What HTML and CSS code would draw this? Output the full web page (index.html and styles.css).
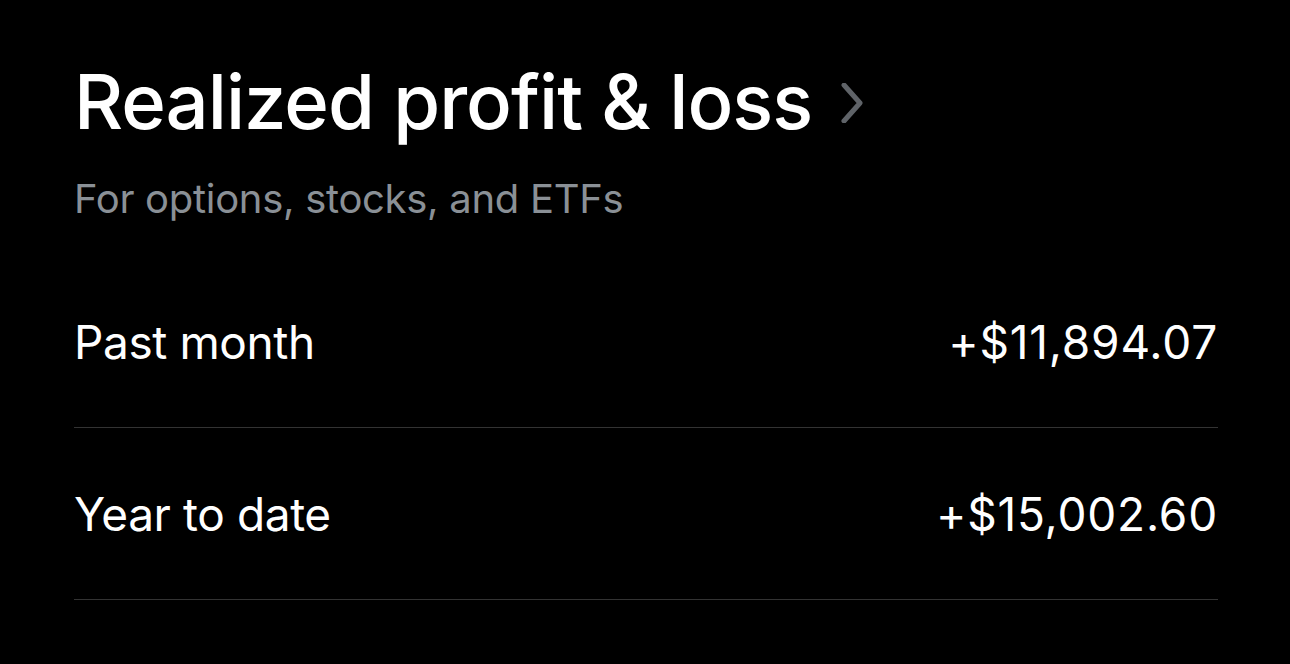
FILE: index.html
```html
<!DOCTYPE html>
<html lang="en">
<head>
    <meta charset="UTF-8">
    <meta name="viewport" content="width=device-width, initial-scale=1.0">
    <title>Realized profit &amp; loss</title>
    <link rel="stylesheet" href="styles.css">
</head>
<body>
    <section class="pnl">
        <header class="pnl-header">
            <h1 class="pnl-title">
                Realized profit &amp; loss
                <svg class="chevron" width="24" height="40" viewBox="0 0 24 40">
                    <path d="M4 2 L20 20 L4 38" fill="none" stroke="#5f6368" stroke-width="5" stroke-linecap="round" stroke-linejoin="round"/>
                </svg>
            </h1>
            <p class="pnl-sub">For options, stocks, and ETFs</p>
        </header>

        <div class="pnl-row">
            <span class="label">Past month</span>
            <span class="value">+$11,894.07</span>
        </div>
        <div class="pnl-row">
            <span class="label">Year to date</span>
            <span class="value">+$15,002.60</span>
        </div>
    </section>
</body>
</html>
```

FILE: styles.css
```css
body {
    margin: 0;
    background-color: #000;
    color: #fff;
    font-family: Inter, "Noto Sans", sans-serif;
}

.pnl {
    padding: 0 72px 0 74px;
}

/* Header */
.pnl-header {
    padding-top: 57px;
    height: 256px;
    box-sizing: border-box;
}

.pnl-title {
    margin: 0;
    font-size: 76px;
    font-weight: 500;
    line-height: 88px;
    letter-spacing: -1px;
    display: flex;
    align-items: center;
    gap: 28px;
}

.chevron {
    margin-top: 4px;
}

.pnl-sub {
    margin: 30px 0 0;
    font-size: 40px;
    line-height: 48px;
    color: #8a9096;
    letter-spacing: -0.3px;
}

/* Rows */
.pnl-row {
    height: 172px;
    display: flex;
    justify-content: space-between;
    align-items: center;
    border-bottom: 1px solid #333;
    font-size: 46px;
    box-sizing: border-box;
}

.label {
    letter-spacing: -0.4px;
}

.value {
    letter-spacing: 0.8px;
}
```
